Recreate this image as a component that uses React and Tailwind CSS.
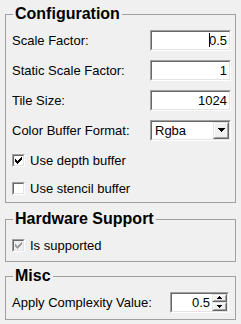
import React from "react";

function Sunken({ className = "", innerClassName = "", children }) {
  return (
    <div className={`border border-t-[#a0a0a0] border-l-[#a0a0a0] border-r-white border-b-white ${className}`}>
      <div className={`h-full w-full border border-t-[#696969] border-l-[#696969] border-r-[#e3e3e3] border-b-[#e3e3e3] ${innerClassName}`}>
        {children}
      </div>
    </div>
  );
}

function Raised({ className = "", children }) {
  return (
    <div className={`border border-t-[#e3e3e3] border-l-[#e3e3e3] border-r-[#696969] border-b-[#696969] bg-[#f0f0f0] ${className}`}>
      <div className="flex h-full w-full items-center justify-center border border-t-white border-l-white border-r-[#a0a0a0] border-b-[#a0a0a0]">
        {children}
      </div>
    </div>
  );
}

function Group({ title, className = "", children }) {
  return (
    <fieldset className={`mx-[5px] border border-[#a0a0a0] pl-[6px] pr-[4px] ${className}`}>
      <legend className="ml-[1px] px-[2px] text-[16px] font-bold leading-[18px]">{title}</legend>
      {children}
    </fieldset>
  );
}

function TextField({ value, caret }) {
  return (
    <Sunken className="h-[21px] w-[81px]" innerClassName="flex items-center justify-end bg-white pr-[2px] leading-[15px]">
      {caret && <span className="mr-[-1px] inline-block h-[14px] w-px bg-black" />}
      <span>{value}</span>
    </Sunken>
  );
}

const CHECK = "M6 0h1v1h-1z M5 1h2v1h-2z M0 2h1v1h-1z M4 2h3v1h-3z M0 3h2v1h-2z M3 3h3v1h-3z M0 4h5v1h-5z M1 5h3v1h-3z M2 6h1v1h-1z";

function Checkbox({ checked, disabled }) {
  return (
    <Sunken className="h-[13px] w-[13px] shrink-0" innerClassName={`flex items-center justify-center ${disabled ? "bg-[#f0f0f0]" : "bg-white"}`}>
      {checked && (
        <svg width="7" height="7" viewBox="0 0 7 7" shapeRendering="crispEdges">
          <path d={CHECK} fill={disabled ? "#a0a0a0" : "#000000"} />
        </svg>
      )}
    </Sunken>
  );
}

function CheckRow({ label, checked, disabled, className = "" }) {
  return (
    <div className={`flex items-center gap-[5px] ${className}`}>
      <Checkbox checked={checked} disabled={disabled} />
      <span>{label}</span>
    </div>
  );
}

export default function App() {
  return (
    <div className="h-[324px] w-[241px] overflow-hidden bg-[#f0f0f0] pt-[5px] font-['Liberation_Sans',Arial,sans-serif] text-[13px] leading-[15px] text-black">
      <Group title="Configuration">
        <div className="pt-[2px]">
          <div className="flex h-[30px] items-center justify-between">
            <span>Scale Factor:</span>
            <TextField value="0.5" caret />
          </div>
          <div className="flex h-[30px] items-center justify-between">
            <span>Static Scale Factor:</span>
            <TextField value="1" />
          </div>
          <div className="flex h-[30px] items-center justify-between">
            <span>Tile Size:</span>
            <TextField value="1024" />
          </div>
          <div className="flex h-[30px] items-center justify-between">
            <span>Color Buffer Format:</span>
            <Sunken className="h-[21px] w-[81px]" innerClassName="flex items-stretch bg-white">
              <span className="flex flex-1 items-center pl-[3px]">Rgba</span>
              <Raised className="w-[16px]">
                <svg width="7" height="4" viewBox="0 0 7 4" shapeRendering="crispEdges">
                  <path d="M0 0h7v1h-7z M1 1h5v1h-5z M2 2h3v1h-3z M3 3h1v1h-1z" fill="#000" />
                </svg>
              </Raised>
            </Sunken>
          </div>
          <CheckRow label="Use depth buffer" checked className="h-[30px]" />
          <CheckRow label="Use stencil buffer" className="h-[27px]" />
        </div>
      </Group>

      <Group title="Hardware Support" className="mt-[7px]">
        <CheckRow label="Is supported" checked disabled className="h-[33px] pt-[1px]" />
      </Group>

      <Group title="Misc" className="mt-[5px]">
        <div className="flex h-[34px] items-center justify-between">
          <span>Apply Complexity Value:</span>
          <Sunken className="mr-[2px] h-[21px] w-[59px]" innerClassName="flex items-stretch bg-white">
            <span className="flex flex-1 items-center justify-end pr-[2px]">0.5</span>
            <div className="flex w-[15px] flex-col">
              <Raised className="h-1/2">
                <svg width="5" height="3" viewBox="0 0 5 3" shapeRendering="crispEdges">
                  <path d="M2 0h1v1h-1z M1 1h3v1h-3z M0 2h5v1h-5z" fill="#000" />
                </svg>
              </Raised>
              <Raised className="h-1/2">
                <svg width="5" height="3" viewBox="0 0 5 3" shapeRendering="crispEdges">
                  <path d="M0 0h5v1h-5z M1 1h3v1h-3z M2 2h1v1h-1z" fill="#000" />
                </svg>
              </Raised>
            </div>
          </Sunken>
        </div>
      </Group>
    </div>
  );
}
